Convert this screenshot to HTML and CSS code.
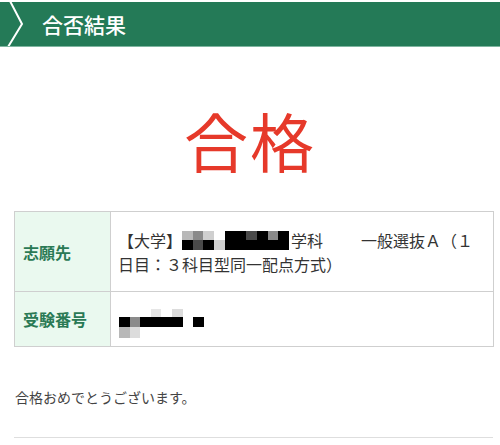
FILE: index.html
```html
<!DOCTYPE html>
<html lang="ja">
<head>
<meta charset="utf-8">
<link rel="stylesheet" href="styles.css">
</head>
<body>
<header class="bar">
  <svg class="chev" width="30" height="44" viewBox="0 0 30 44"><polyline points="10,-1 22,22 8,45" fill="none" stroke="#fff" stroke-width="2"/></svg>
  <h1 class="title">合否結果</h1>
</header>
<div class="result">合格</div>
<table class="info">
  <tr class="r1">
    <th>志願先</th>
    <td><span class="ln">【大学】<span class="px px1"><i class="g1"></i><i class="g2"></i><i class="g3"></i><i class="w"></i><i class="k"></i><i class="k"></i><i class="d"></i><i class="k"></i><i class="g2"></i><i class="k"></i><i class="k"></i><i class="d"></i><i class="k"></i><i class="g3"></i><i class="k"></i><i class="k"></i><i class="k"></i><i class="k"></i><i class="k"></i><i class="k"></i></span>学科<span class="gap"></span>一般選抜Ａ（１</span><br><span class="ln">日目：３科目型同一配点方式）</span></td>
  </tr>
  <tr class="r2">
    <th>受験番号</th>
    <td><span class="px px2"><i class="w"></i><i class="w"></i><i class="w"></i><i class="l1"></i><i class="w"></i><i class="l2"></i><i class="w"></i><i class="w"></i><i class="k"></i><i class="g2"></i><i class="k"></i><i class="k"></i><i class="k"></i><i class="k"></i><i class="w"></i><i class="k"></i><i class="g1"></i><i class="l2"></i><i class="w"></i><i class="w"></i><i class="w"></i><i class="w"></i><i class="w"></i><i class="w"></i></span></td>
  </tr>
</table>
<p class="msg">合格おめでとうございます。</p>
<hr class="rule">
</body>
</html>
```
FILE: styles.css
```css
html, body {
  margin: 0;
  padding: 0;
  background: #fff;
  font-family: "Noto Sans CJK JP", "Noto Sans", sans-serif;
}
.bar {
  margin-top: 2px;
  height: 44px;
  background: #247a57;
  display: flex;
  align-items: center;
  border-bottom: 1px solid #7fb5a0;
}
.chev {
  display: block;
  flex: none;
}
.title {
  margin: 0 0 0 12px;
  color: #fff;
  font-size: 21px;
  font-weight: 500;
  line-height: 44px;
}
.result {
  margin-top: 52px;
  text-align: center;
  color: #e6392a;
  font-size: 64px;
  line-height: 80px;
  letter-spacing: 2px;
}
.info {
  margin: 32px 0 0 14px;
  width: 480px;
  border-collapse: collapse;
  border: 1px solid #cfcfcf;
}
.info th, .info td {
  border: 1px solid #cfcfcf;
  font-size: 16px;
  line-height: 24px;
  vertical-align: middle;
}
.info th {
  width: 87px;
  background: #eaf9ef;
  color: #2a7a55;
  text-align: left;
  padding: 0 0 0 8px;
  font-weight: 700;
}
.info td {
  color: #333;
  padding: 0 10px 0 7px;
  white-space: nowrap;
}
.gap {
  display: inline-block;
  width: 38px;
}
.r1 { height: 80px; }
.r2 { height: 55px; }
.px {
  display: inline-grid;
}
.px i { display: block; }
.px1 {
  grid-template-columns: repeat(10, 10.7px);
  grid-template-rows: 9px 10px;
  margin: 0 2px 0 0;
  vertical-align: 7px;
}
.px2 {
  grid-template-columns: repeat(8, 10.6px);
  grid-template-rows: 8px 10px 11px;
  vertical-align: 2px;
  margin-left: 1px;
}
.k { background: #000; }
.d { background: #4a4a4a; }
.g1 { background: #b8b8b8; }
.g2 { background: #8a8a8a; }
.g3 { background: #cfcfcf; }
.l1 { background: #e6e6e6; }
.l2 { background: #dcdcdc; }
.w { background: transparent; }
.msg {
  margin: 40px 0 0 15px;
  font-size: 14px;
  color: #444;
  line-height: 20px;
}
.rule {
  margin: 30px 7px 0 14px;
  border: 0;
  border-top: 1px solid #dedede;
  height: 0;
}
```
